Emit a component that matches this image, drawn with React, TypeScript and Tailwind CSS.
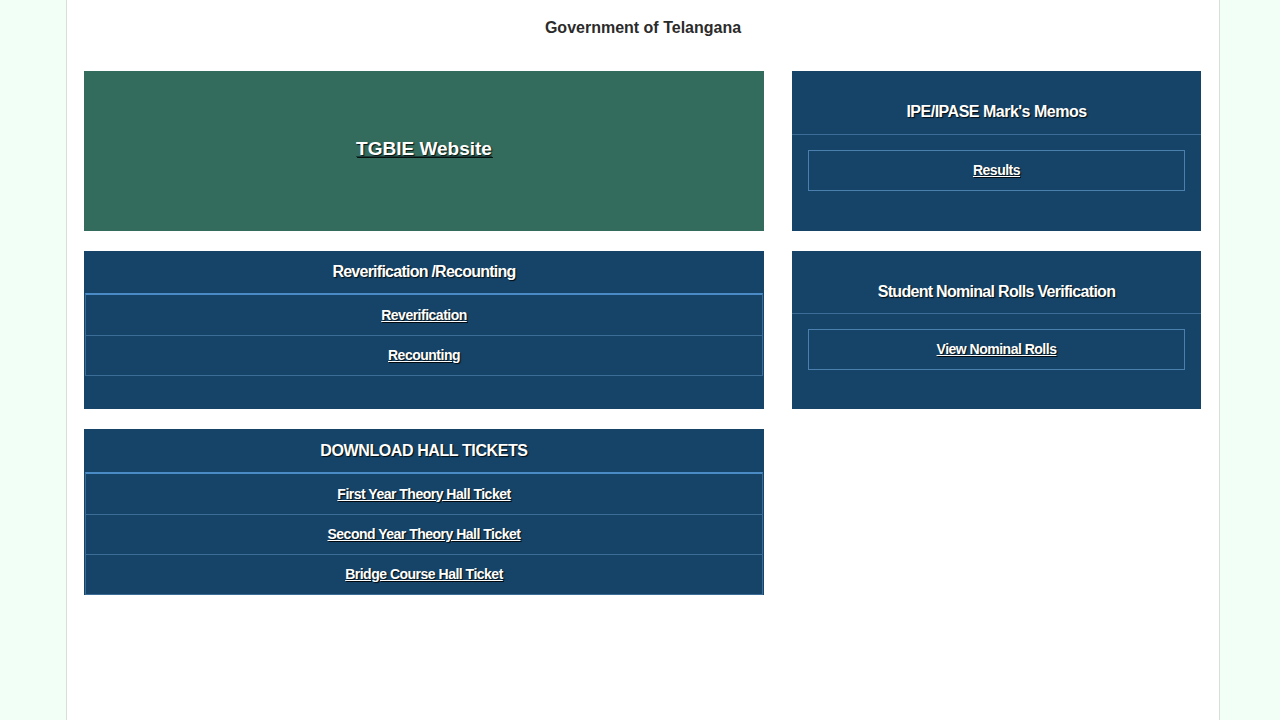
import React from "react";

const ts = "[text-shadow:1px_1px_1px_rgba(0,0,0,0.85)]";

function LinkRow({ label, first }: { label: string; first?: boolean }) {
  return (
    <div
      className={`h-[40px] flex items-center justify-center ${first ? "" : "border-t border-[#3b6d96]"}`}
    >
      <a
        href="#"
        className={`text-white text-[14px] font-bold underline tracking-[-0.5px] ${ts}`}
      >
        {label}
      </a>
    </div>
  );
}

function ListCard({
  title,
  links,
  headerH,
  tracking,
  bottomPad,
}: {
  title: string;
  links: string[];
  headerH: string;
  tracking: string;
  bottomPad?: boolean;
}) {
  return (
    <div className={`bg-[#154468] ${bottomPad ? "pb-[33px]" : ""}`}>
      <div className={`${headerH} flex items-center justify-center text-white text-[16px] font-bold ${tracking} ${ts}`}>
        {title}
      </div>
      <div className="mx-[1px] border-t-2 border-t-[#4a8bc6] border-x border-x-[#3b6d96] border-b border-b-[#3b6d96]">
        {links.map((l, i) => (
          <LinkRow key={l} label={l} first={i === 0} />
        ))}
      </div>
    </div>
  );
}

function BoxCard({
  title,
  link,
  pb,
  tracking,
}: {
  title: string;
  link: string;
  pb: string;
  tracking: string;
}) {
  return (
    <div className="bg-[#154468] h-full flex flex-col">
      <div className={`pt-[30px] ${pb} leading-[21px] text-center text-white text-[16px] font-bold ${tracking} ${ts}`}>
        {title}
      </div>
      <div className="border-t border-[#3b6d96]" />
      <div className="px-[16px] pt-[15px]">
        <div className="h-[41px] border border-[#4a7fae] flex items-center justify-center">
          <a href="#" className={`text-white text-[14px] font-bold underline tracking-[-0.5px] ${ts}`}>
            {link}
          </a>
        </div>
      </div>
    </div>
  );
}

export default function App() {
  return (
    <div
      className="min-h-[720px] bg-[#f1fff6] flex justify-center pl-[6px]"
      style={{ fontFamily: '"Liberation Sans", Arial, sans-serif' }}
    >
      <div className="w-[1154px] min-h-[720px] bg-white border-x border-[#d9ded9] px-[17px]">
        <div className="pt-[18px] h-[71px] text-center text-[16px] font-bold text-[#2b2b2b] leading-[20px]">
          Government of Telangana
        </div>
        <div className="grid grid-cols-[680px_409px] gap-x-[28px] gap-y-[20px] items-start">
          <div className="bg-[#336b5c] h-[160px] flex items-center justify-center pb-[4px]">
            <a href="#" className={`text-white text-[19px] font-bold underline decoration-[#1b3a3a] ${ts}`}>
              TGBIE Website
            </a>
          </div>
          <div className="h-[160px]">
            <BoxCard title="IPE/IPASE Mark's Memos" link="Results" pb="pb-[12px]" tracking="tracking-[-0.5px]" />
          </div>
          <div className="h-[158px]">
            <ListCard
              title="Reverification /Recounting"
              links={["Reverification", "Recounting"]}
              headerH="h-[42px]"
              tracking="tracking-[-0.75px]"
              bottomPad
            />
          </div>
          <div className="h-[158px]">
            <BoxCard
              title="Student Nominal Rolls Verification"
              link="View Nominal Rolls"
              pb="pb-[11px]"
              tracking="tracking-[-0.7px]"
            />
          </div>
          <div>
            <ListCard
              title="DOWNLOAD HALL TICKETS"
              links={["First Year Theory Hall Ticket", "Second Year Theory Hall Ticket", "Bridge Course Hall Ticket"]}
              headerH="h-[43px]"
              tracking="tracking-[-0.4px]"
            />
          </div>
        </div>
      </div>
    </div>
  );
}
